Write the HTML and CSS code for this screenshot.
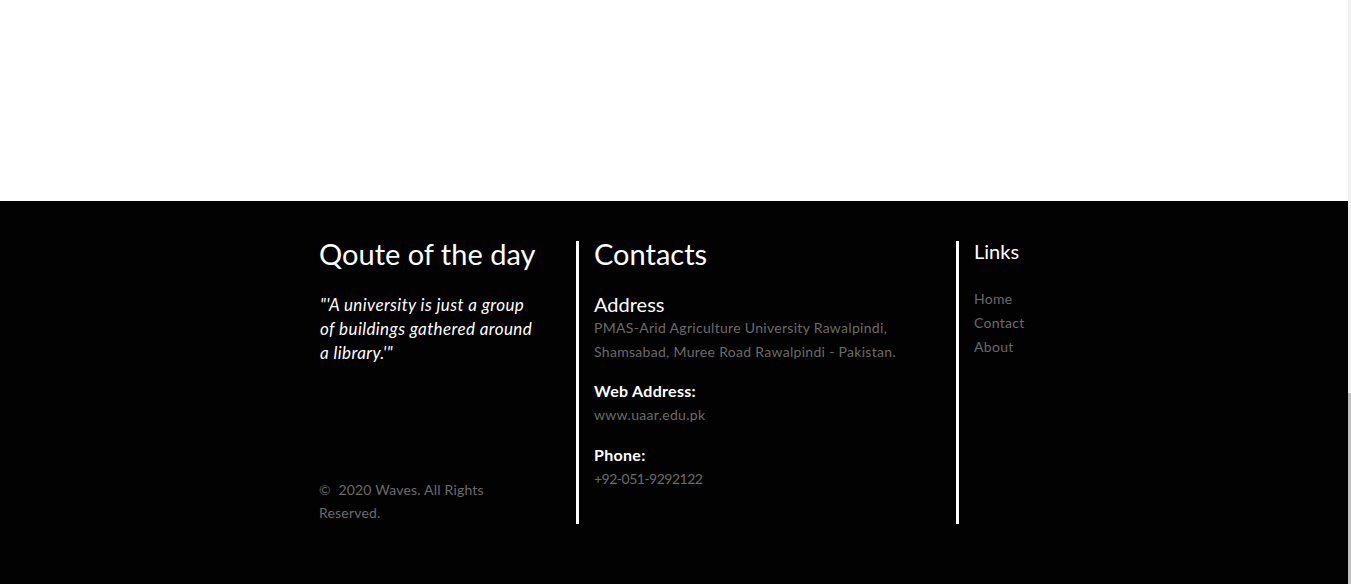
FILE: index.html
```html
<!DOCTYPE html>
<html lang="en">
<head>
<meta charset="utf-8">
<title>Footer</title>
<link rel="stylesheet" href="styles.css">
</head>
<body>
<div class="page">
  <div class="top"></div>
  <footer class="footer">
    <div class="cols">
      <div class="col col-quote">
        <h2 class="title">Qoute of the day</h2>
        <p class="quote">"'A university is just a group<br>of buildings gathered around<br>a library.'"</p>
        <p class="copy">©&nbsp; 2020 Waves. All Rights<br>Reserved.</p>
      </div>
      <div class="col col-contacts">
        <h2 class="title">Contacts</h2>
        <h4 class="sub">Address</h4>
        <p class="muted addr">PMAS-Arid Agriculture University Rawalpindi,<br>Shamsabad, Muree Road Rawalpindi - Pakistan.</p>
        <h5 class="label">Web Address:</h5>
        <p class="muted">www.uaar.edu.pk</p>
        <h5 class="label label-gap">Phone:</h5>
        <p class="muted phone">+92-051-9292122</p>
      </div>
      <div class="col col-links">
        <h3 class="links-title">Links</h3>
        <ul class="links">
          <li><a href="#">Home</a></li>
          <li><a href="#">Contact</a></li>
          <li><a href="#">About</a></li>
        </ul>
      </div>
    </div>
  </footer>
</div>
<div class="scrollbar"><div class="thumb"></div></div>
</body>
</html>
```
FILE: styles.css
```css
html, body {
  margin: 0;
  padding: 0;
}
body {
  height: 584px;
  overflow: hidden;
  display: flex;
  font-family: Lato, "Open Sans", sans-serif;
  background: #ffffff;
}
.page {
  flex: 1;
  display: flex;
  flex-direction: column;
}
.top {
  height: 201px;
  background: #ffffff;
}
.footer {
  flex: 1;
  background: #020202;
  padding-top: 40px;
}
.cols {
  display: flex;
  padding-left: 319px;
}
.col {
  height: 283px;
  box-sizing: border-box;
}
.col-quote {
  width: 257px;
  display: flex;
  flex-direction: column;
}
.col-contacts {
  width: 380px;
  border-left: 3px solid #ffffff;
  padding-left: 15px;
}
.col-links {
  width: 250px;
  border-left: 3px solid #ffffff;
  padding-left: 15px;
}
.title {
  margin: 0;
  font-size: 29px;
  line-height: 25px;
  font-weight: 400;
  color: #ffffff;
}
.quote {
  margin: 27px 0 0 1px;
  font-size: 17px;
  line-height: 24px;
  letter-spacing: 0.4px;
  font-style: italic;
  color: #ffffff;
}
.copy {
  margin: auto 0 0;
  font-size: 14px;
  line-height: 23px;
  letter-spacing: 0.2px;
  color: #6a6a6a;
}
.sub {
  margin: 26px 0 0;
  font-size: 20px;
  line-height: 24px;
  font-weight: 400;
  color: #ffffff;
}
.muted {
  margin: 0;
  font-size: 14px;
  line-height: 24px;
  letter-spacing: 0.3px;
  color: #6a6a6a;
}
.phone {
  letter-spacing: -0.5px;
}
.addr {
  margin-bottom: 15px;
}
.label {
  margin: 0;
  font-size: 16px;
  line-height: 24px;
  letter-spacing: 0.3px;
  font-weight: 700;
  color: #ffffff;
}
.label-gap {
  margin-top: 16px;
}
.links-title {
  margin: 0;
  font-size: 20px;
  line-height: 20px;
  font-weight: 400;
  color: #ffffff;
}
.links {
  list-style: none;
  margin: 26px 0 0;
  padding: 0;
}
.links li {
  font-size: 14px;
  line-height: 24px;
  letter-spacing: 0.3px;
}
.links a {
  color: #6a6a6a;
  text-decoration: none;
}
.scrollbar {
  width: 3px;
  background: #f1f1f1;
  display: flex;
  flex-direction: column;
}
.thumb {
  margin-top: 393px;
  flex: 1;
  background: #c1c1c1;
}
```
